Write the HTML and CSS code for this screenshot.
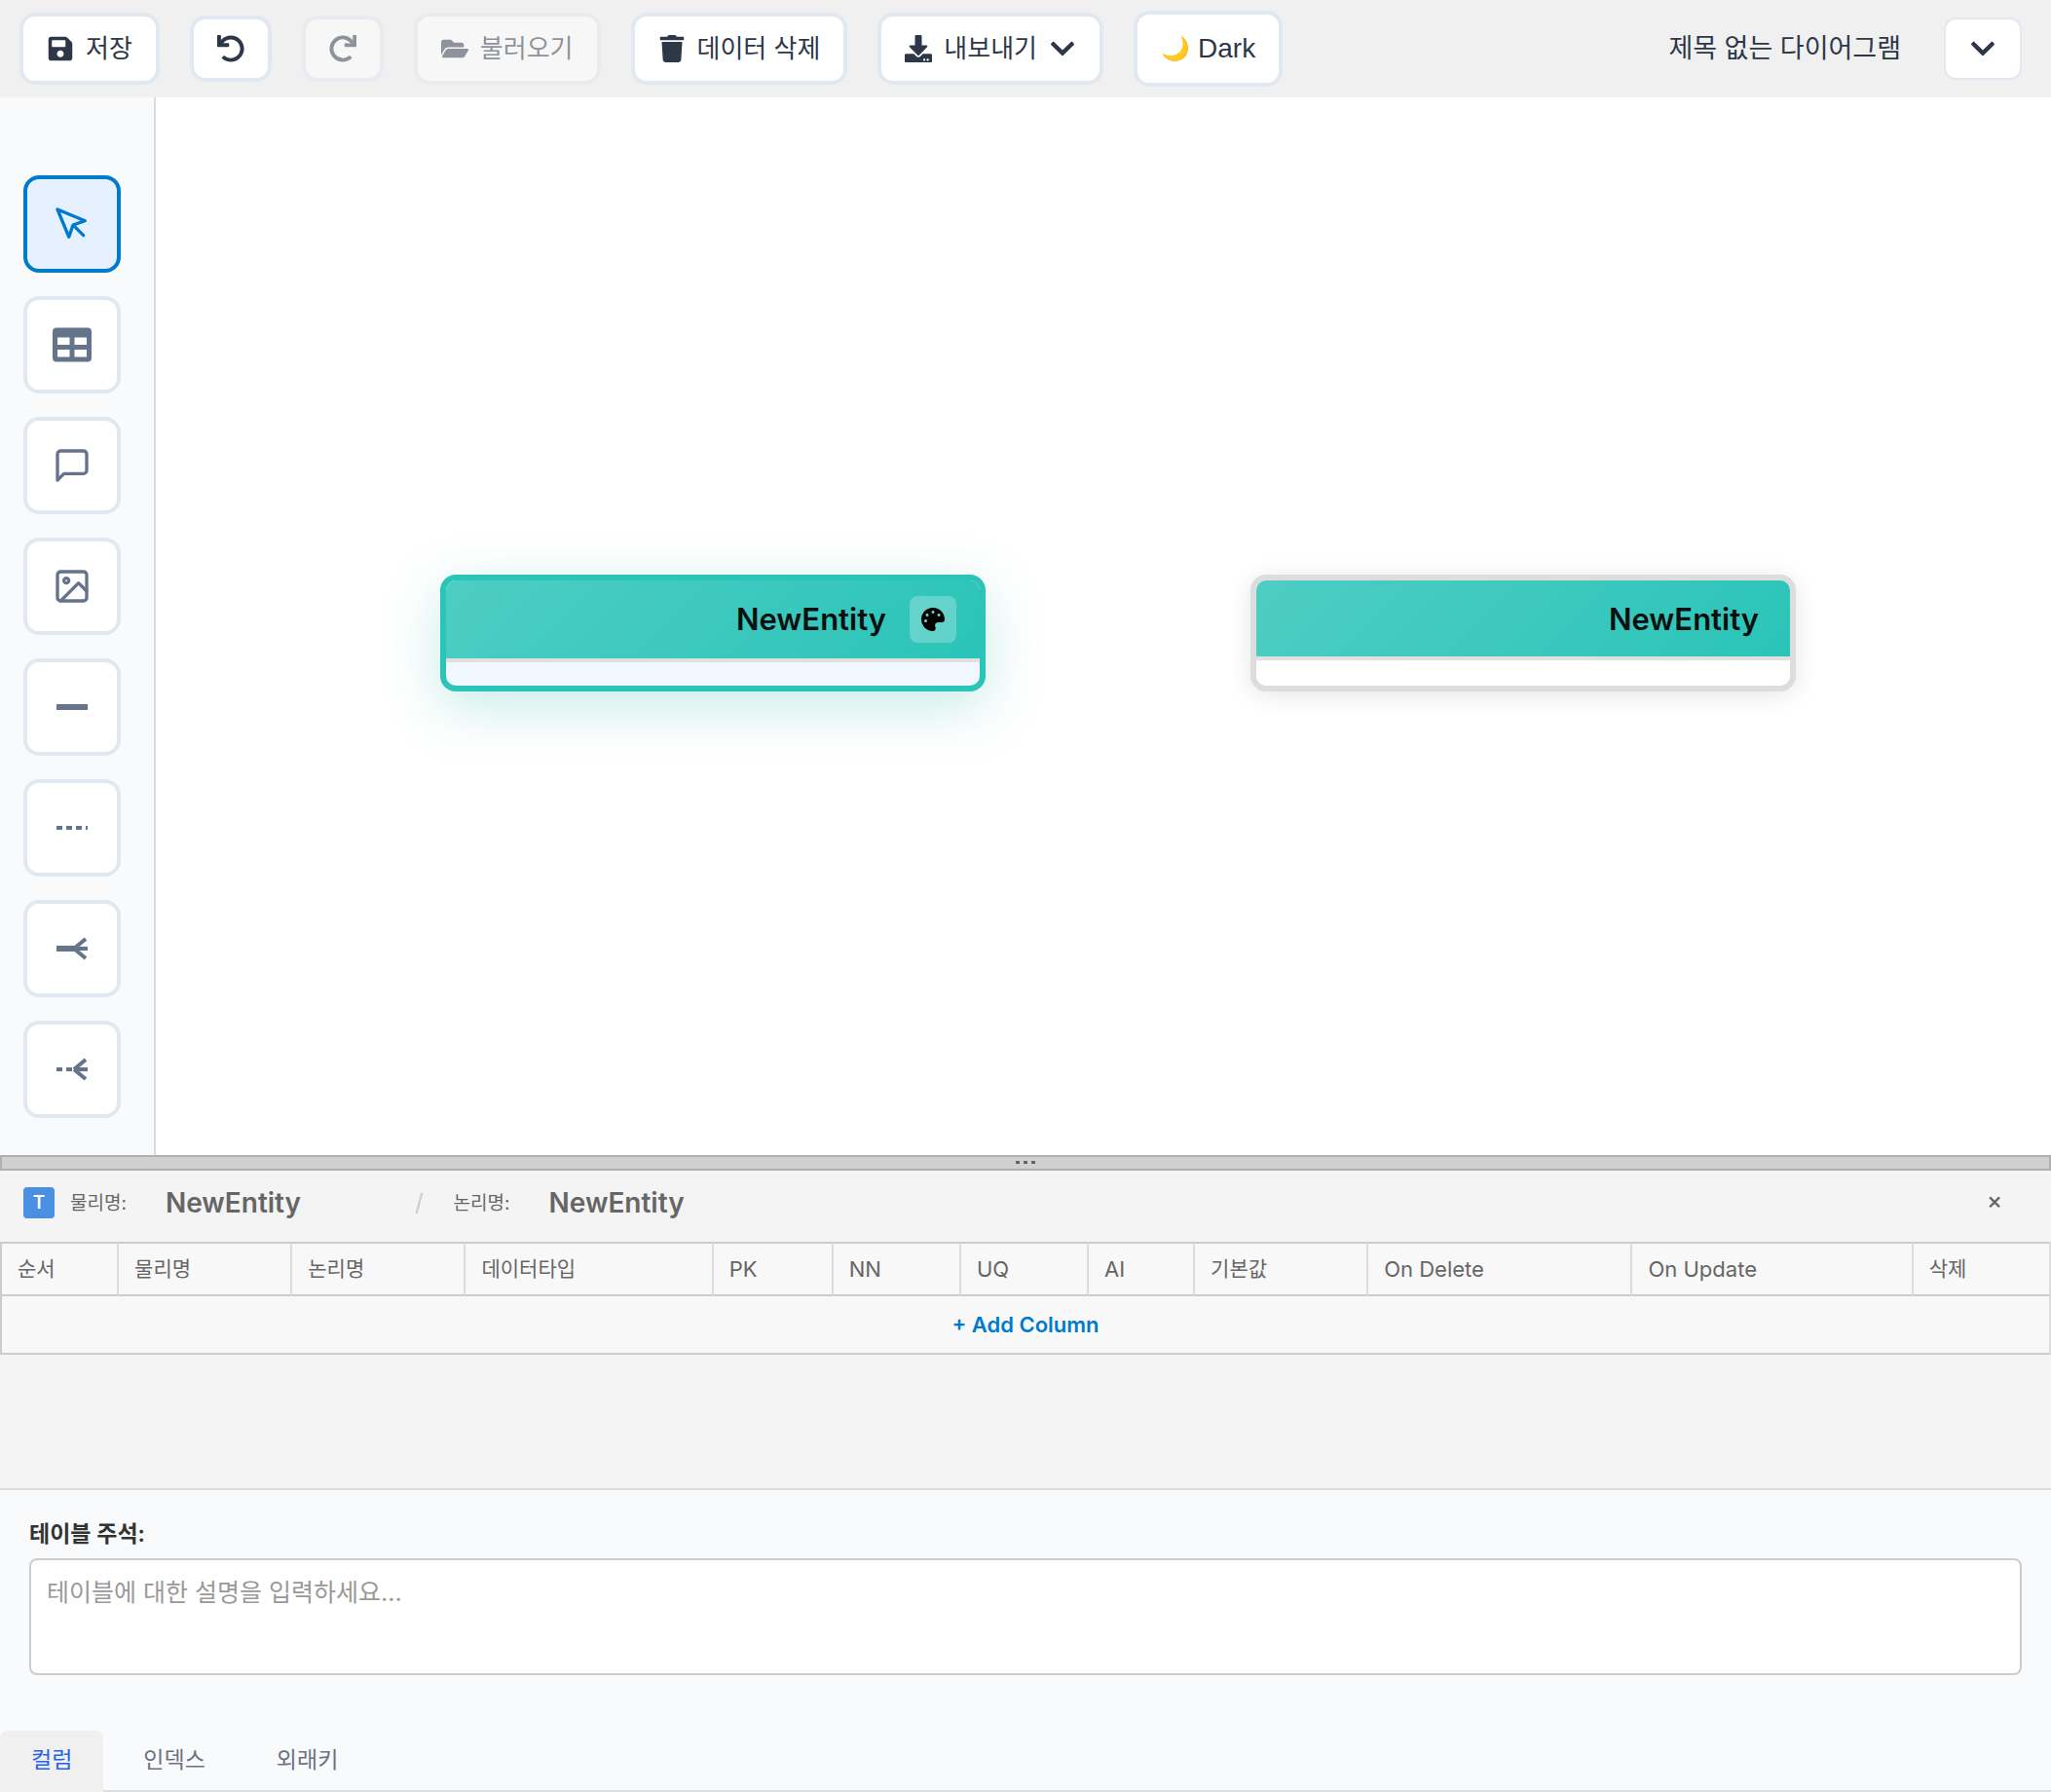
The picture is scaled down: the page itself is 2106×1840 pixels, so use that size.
FILE: index.html
```html
<!DOCTYPE html>
<html lang="ko">
<head>
<meta charset="utf-8">
<meta name="viewport" content="width=device-width, initial-scale=1">
<title>제목 없는 다이어그램</title>
<link rel="stylesheet" href="styles.css">
</head>
<body>
<div class="app">
  <header class="toolbar">
    <button class="btn" type="button"><svg class="icon" viewBox="0 0 448 512"><path d="M433.941 129.941l-83.882-83.882A48 48 0 0 0 316.118 32H48C21.49 32 0 53.49 0 80v352c0 26.51 21.49 48 48 48h352c26.51 0 48-21.49 48-48V163.882a48 48 0 0 0-14.059-33.941zM224 416c-35.346 0-64-28.654-64-64 0-35.346 28.654-64 64-64s64 28.654 64 64c0 35.346-28.654 64-64 64zm96-304.52V212c0 6.627-5.373 12-12 12H76c-6.627 0-12-5.373-12-12V108c0-6.627 5.373-12 12-12h228.52c3.183 0 6.235 1.264 8.485 3.515l3.48 3.48A11.996 11.996 0 0 1 320 111.48z"/></svg>저장</button>
    <button class="btn" type="button" aria-label="실행 취소"><svg class="icon" viewBox="0 0 512 512"><path d="M212.333 224.333H12c-6.627 0-12-5.373-12-12V12C0 5.373 5.373 0 12 0h48c6.627 0 12 5.373 12 12v78.112C117.773 39.279 184.26 7.47 258.175 8.007c136.906.994 246.448 111.623 246.157 248.532C504.041 393.258 393.12 504 256.333 504c-64.089 0-122.496-24.313-166.51-64.215-5.099-4.622-5.334-12.554-.467-17.42l33.967-33.967c4.474-4.474 11.662-4.717 16.401-.525C170.76 415.336 211.58 432 256.333 432c97.268 0 176-78.716 176-176 0-97.267-78.716-176-176-176-58.496 0-110.28 28.476-142.274 72.333h98.274c6.627 0 12 5.373 12 12v48c0 6.627-5.373 12-12 12z"/></svg></button>
    <button class="btn" type="button" aria-label="다시 실행" disabled><svg class="icon" viewBox="0 0 512 512"><path d="M500.33 0h-47.41a12 12 0 0 0-12 12.57l4 82.76A247.42 247.42 0 0 0 256 8C119.34 8 7.9 119.53 8 256.19 8.1 393.07 119.1 504 256 504a247.1 247.1 0 0 0 166.18-63.91 12 12 0 0 0 .48-17.43l-34-34a12 12 0 0 0-16.38-.55A176 176 0 1 1 402.1 157.8l-101.53-4.87a12 12 0 0 0-12.57 12v47.41a12 12 0 0 0 12 12h200.33a12 12 0 0 0 12-12V12a12 12 0 0 0-12-12z"/></svg></button>
    <button class="btn" type="button" disabled><svg class="icon" viewBox="0 0 576 512"><path d="M572.694 292.093L500.27 416.248A63.997 63.997 0 0 1 444.989 448H45.025c-18.523 0-30.064-20.093-20.731-36.093l72.424-124.155A64 64 0 0 1 152 256h399.964c18.523 0 30.064 20.093 20.73 36.093zM152 224h328v-48c0-26.51-21.49-48-48-48H272l-64-64H48C21.49 64 0 85.49 0 112v278.046l69.077-118.418C86.214 242.25 117.989 224 152 224z"/></svg>불러오기</button>
    <button class="btn" type="button"><svg class="icon" viewBox="0 0 448 512"><path d="M432 32H312l-9.4-18.7A24 24 0 0 0 281.1 0H166.8a23.72 23.72 0 0 0-21.4 13.3L136 32H16A16 16 0 0 0 0 48v32a16 16 0 0 0 16 16h416a16 16 0 0 0 16-16V48a16 16 0 0 0-16-16zM53.2 467a48 48 0 0 0 47.9 45h245.8a48 48 0 0 0 47.9-45L416 128H32z"/></svg>데이터 삭제</button>
    <button class="btn" type="button"><svg class="icon" viewBox="0 0 512 512"><path d="M216 0h80c13.3 0 24 10.7 24 24v168h87.7c17.8 0 26.7 21.5 14.1 34.1L269.7 378.3c-7.5 7.5-19.8 7.5-27.3 0L90.1 226.1c-12.6-12.6-3.7-34.1 14.1-34.1H192V24c0-13.3 10.7-24 24-24zm296 376v112c0 13.3-10.7 24-24 24H24c-13.3 0-24-10.7-24-24V376c0-13.3 10.7-24 24-24h146.7l49 49c20.1 20.1 52.5 20.1 72.6 0l49-49H488c13.3 0 24 10.7 24 24zm-124 88c0-11-9-20-20-20s-20 9-20 20 9 20 20 20 20-9 20-20zm64 0c0-11-9-20-20-20s-20 9-20 20 9 20 20 20 20-9 20-20z"/></svg>내보내기<svg class="icon" viewBox="0 0 448 512"><path d="M207.029 381.476L12.686 187.132c-9.373-9.373-9.373-24.569 0-33.941l22.667-22.667c9.357-9.357 24.522-9.375 33.901-.04L224 284.505l154.745-154.021c9.379-9.335 24.544-9.317 33.901.04l22.667 22.667c9.373 9.373 9.373 24.569 0 33.941L240.971 381.476c-9.373 9.372-24.569 9.372-33.942 0z"/></svg></button>
    <button class="btn btn-theme" type="button"><span class="moon">🌙</span>Dark</button>
    <div class="diagram-title">
      <span>제목 없는 다이어그램</span>
      <button class="btn btn-menu" type="button" aria-label="다이어그램 메뉴"><svg class="icon" viewBox="0 0 448 512"><path d="M207.029 381.476L12.686 187.132c-9.373-9.373-9.373-24.569 0-33.941l22.667-22.667c9.357-9.357 24.522-9.375 33.901-.04L224 284.505l154.745-154.021c9.379-9.335 24.544-9.317 33.901.04l22.667 22.667c9.373 9.373 9.373 24.569 0 33.941L240.971 381.476c-9.373 9.372-24.569 9.372-33.942 0z"/></svg></button>
    </div>
  </header>

  <div class="workspace">
    <nav class="tools" aria-label="도구">
      <button class="tool tool-active" type="button" aria-label="선택"><svg class="tool-icon outline" viewBox="0 0 24 24"><path d="M3 3l7.07 16.97 2.51-7.39 7.39-2.51L3 3z"/><path d="M13 13l6 6"/></svg></button>
      <button class="tool" type="button" aria-label="테이블"><svg class="tool-icon" viewBox="0 0 512 512"><path d="M464 32H48C21.49 32 0 53.49 0 80v352c0 26.51 21.49 48 48 48h416c26.51 0 48-21.49 48-48V80c0-26.51-21.49-48-48-48zM224 416H64v-96h160v96zm0-160H64v-96h160v96zm224 160H288v-96h160v96zm0-160H288v-96h160v96z"/></svg></button>
      <button class="tool" type="button" aria-label="메모"><svg class="tool-icon outline" viewBox="0 0 24 24"><path d="M21 15a2 2 0 0 1-2 2H7l-4 4V5a2 2 0 0 1 2-2h14a2 2 0 0 1 2 2z"/></svg></button>
      <button class="tool" type="button" aria-label="이미지"><svg class="tool-icon outline" viewBox="0 0 24 24"><rect x="3" y="3" width="18" height="18" rx="2"/><circle cx="8.5" cy="8.5" r="1.5"/><path d="M21 15l-5-5L5 21"/></svg></button>
      <button class="tool" type="button" aria-label="식별 일대일 관계"><svg class="relation-icon" viewBox="0 0 16 16"><path stroke-width="3" d="M0 8h16"/></svg></button>
      <button class="tool" type="button" aria-label="비식별 일대일 관계"><svg class="relation-icon" viewBox="0 0 16 16"><path stroke-dasharray="3 2" d="M0 8h16"/></svg></button>
      <button class="tool" type="button" aria-label="식별 일대다 관계"><svg class="relation-icon" viewBox="0 0 16 16"><path stroke-width="3" d="M0 8h10"/><path d="M9 8l6-5M9 8h7M9 8l6 5"/></svg></button>
      <button class="tool" type="button" aria-label="비식별 일대다 관계"><svg class="relation-icon" viewBox="0 0 16 16"><path stroke-dasharray="3 2" d="M0 8h9"/><path d="M9 8l6-5M9 8h7M9 8l6 5"/></svg></button>
    </nav>
    <main class="canvas">
      <section class="entity entity-selected entity-first">
        <header class="entity-head">NewEntity
          <button class="palette" type="button" aria-label="색상"><svg viewBox="0 0 512 512"><path d="M204.3 5C104.9 24.4 24.8 104.3 5.2 203.4c-37 187 131.7 326.4 258.8 306.7 41.2-6.4 61.4-54.6 42.5-91.7-23.1-45.4 9.9-98.4 60.9-98.4h79.7c35.8 0 64.8-29.6 64.9-65.3C511.5 97.1 368.1-26.9 204.3 5zM96 320c-17.7 0-32-14.3-32-32s14.3-32 32-32 32 14.3 32 32-14.3 32-32 32zm32-128c-17.7 0-32-14.3-32-32s14.3-32 32-32 32 14.3 32 32-14.3 32-32 32zm128-64c-17.7 0-32-14.3-32-32s14.3-32 32-32 32 14.3 32 32-14.3 32-32 32zm128 64c-17.7 0-32-14.3-32-32s14.3-32 32-32 32 14.3 32 32-14.3 32-32 32z"/></svg></button>
        </header>
      </section>
      <section class="entity entity-second">
        <header class="entity-head">NewEntity</header>
      </section>
    </main>
  </div>

  <div class="resizer" role="separator"><i></i><i></i><i></i></div>

  <section class="editor">
    <header class="editor-head">
      <span class="badge">T</span>
      <label for="physical">물리명:</label>
      <input id="physical" class="name-input" type="text" value="NewEntity">
      <span class="slash">/</span>
      <label for="logical">논리명:</label>
      <input id="logical" class="name-input" type="text" value="NewEntity">
      <button class="close" type="button" aria-label="닫기">×</button>
    </header>
    <div class="columns-area">
      <table class="columns">
        <thead>
          <tr>
            <th class="c-order hangul">순서</th><th class="c-name hangul">물리명</th><th class="c-name hangul">논리명</th><th class="c-type hangul">데이터타입</th><th class="c-pk">PK</th><th class="c-flag">NN</th><th class="c-flag">UQ</th><th class="c-ai">AI</th><th class="c-name hangul">기본값</th><th class="c-delete">On Delete</th><th class="c-update">On Update</th><th class="c-remove hangul">삭제</th>
          </tr>
        </thead>
        <tbody>
          <tr><td colspan="12"><button class="add" type="button">+ Add Column</button></td></tr>
        </tbody>
      </table>
    </div>
    <div class="comment">
      <label for="comment">테이블 주석:</label>
      <textarea id="comment" placeholder="테이블에 대한 설명을 입력하세요..."></textarea>
    </div>
    <nav class="tabs">
      <button class="tab tab-active" type="button">컬럼</button>
      <button class="tab" type="button">인덱스</button>
      <button class="tab" type="button">외래키</button>
    </nav>
  </section>
</div>
</body>
</html>
```
FILE: styles.css
```css
* {
  box-sizing: border-box;
}

body {
  margin: 0;
  font-family: Inter, "Noto Sans CJK KR", sans-serif;
  color: #333;
  background: #fff;
}

button,
input,
textarea {
  font: inherit;
  color: inherit;
}

button {
  cursor: pointer;
}

.app {
  display: flex;
  flex-direction: column;
  min-height: 100vh;
}

/* Toolbar */
.toolbar {
  display: flex;
  align-items: center;
  gap: 31px;
  height: 100px;
  padding: 0 30px 0 20px;
  background: #f0f0f0;
  color: #2d3748;
  font-family: "Liberation Sans", "Noto Sans CJK KR", sans-serif;
}

.btn {
  display: flex;
  align-items: center;
  gap: 12px;
  padding: 16px 24px;
  border: 4px solid #e2e8f0;
  border-radius: 16px;
  background: #fff;
  font-size: 26px;
  line-height: 34px;
  white-space: nowrap;
}

.btn:disabled {
  opacity: 0.5;
}

.btn-theme {
  gap: 8px;
  font-size: 28px;
  line-height: 38px;
}

.moon {
  font-size: 24px;
}

.btn-menu {
  border-width: 2px;
  border-radius: 12px;
}

.icon {
  display: block;
  width: 28px;
  height: 28px;
  fill: currentColor;
}

.diagram-title {
  display: flex;
  align-items: center;
  gap: 44px;
  margin-left: auto;
  font-size: 27px;
  line-height: 34px;
}

/* Workspace */
.workspace {
  display: flex;
  flex: 1;
}

.tools {
  display: flex;
  flex-direction: column;
  gap: 24px;
  padding: 80px 34px 38px 24px;
  border-right: 2px solid #ddd;
  background: #f8fafc;
}

.tool {
  display: flex;
  align-items: center;
  justify-content: center;
  width: 100px;
  height: 100px;
  padding: 0;
  border: 4px solid #e2e8f0;
  border-radius: 16px;
  background: #fff;
  color: #64748b;
}

.tool-active {
  border-color: #007acc;
  background: #e6f1ff;
  color: #007acc;
}

.tool-icon {
  width: 40px;
  height: 40px;
  fill: currentColor;
}

.outline {
  fill: none;
  stroke: currentColor;
  stroke-width: 2;
  stroke-linecap: round;
  stroke-linejoin: round;
}

.relation-icon {
  width: 32px;
  height: 32px;
  fill: none;
  stroke: currentColor;
  stroke-width: 2;
}

.canvas {
  position: relative;
  flex: 1;
  background: #fff;
}

.entity {
  position: absolute;
  top: 490px;
  width: 560px;
  height: 120px;
  overflow: hidden;
  border: 6px solid #ddd;
  border-radius: 16px;
  background: #fff;
  box-shadow: 0 4px 24px rgba(0, 0, 0, 0.1);
}

.entity-first {
  left: 292px;
}

.entity-second {
  left: 1124px;
}

.entity-selected {
  border-color: #2bc4b8;
  background: #f0f7ff;
  box-shadow: 0 16px 56px rgba(43, 180, 168, 0.26);
}

.entity-head {
  display: flex;
  align-items: center;
  justify-content: flex-end;
  gap: 24px;
  padding: 20px 32px 18px;
  border-bottom: 4px solid #e0e0e0;
  background: linear-gradient(135deg, #4ecdc4, #2bc4b8);
  color: #08100f;
  font-size: 31px;
  font-weight: 600;
  line-height: 40px;
}

.entity-selected .entity-head {
  padding: 16px 24px;
}

.palette {
  display: flex;
  align-items: center;
  justify-content: center;
  width: 48px;
  height: 48px;
  padding: 0;
  border: 0;
  border-radius: 8px;
  background: rgba(255, 255, 255, 0.25);
  color: #000;
}

.palette svg {
  width: 24px;
  height: 24px;
  fill: currentColor;
}

/* Editor panel */
.resizer {
  display: flex;
  align-items: center;
  justify-content: center;
  gap: 4px;
  height: 16px;
  padding-bottom: 1px;
  border: 2px solid #b0b0b0;
  background: #d0d0d0;
}

.resizer i {
  width: 4px;
  height: 3px;
  background: #666;
}

.editor {
  background: #f4f4f4;
}

.editor-head {
  display: flex;
  align-items: center;
  gap: 16px;
  height: 73px;
  padding: 0 50px 8px 24px;
  color: #666;
  font-size: 19px;
}

.editor-head label {
  padding-bottom: 2px;
}

.badge {
  width: 32px;
  border-radius: 4px;
  background: #4a90e2;
  color: #fff;
  font-weight: 600;
  line-height: 32px;
  text-align: center;
}

.name-input {
  width: 264px;
  padding: 0 24px;
  border: 0;
  background: transparent;
  font-size: 28px;
  font-weight: 600;
}

.slash {
  padding-right: 15px;
  color: #ccc;
  font-size: 24px;
}

.close {
  margin-left: auto;
  padding: 0 0 4px;
  border: 0;
  background: none;
  font-size: 24px;
  font-weight: 500;
  line-height: 32px;
}

.columns-area {
  min-height: 253px;
}

.columns {
  width: 100%;
  table-layout: fixed;
  border-collapse: separate;
  border-spacing: 0;
  border-left: 2px solid #ccc;
  background: #f8f8f8;
  color: #666;
  font-size: 22px;
}

.columns th {
  height: 56px;
  padding: 0 16px;
  border: solid #ddd;
  border-width: 2px 2px 2px 0;
  border-top-color: #ccc;
  border-bottom-color: #ccc;
  font-weight: 400;
  text-align: left;
}

.columns .hangul {
  padding-bottom: 5px;
  font-size: 21px;
}

.columns td {
  padding: 0;
  border-right: 2px solid #ddd;
  border-bottom: 2px solid #ccc;
}

.c-order { width: 120px; }
.c-name { width: 178px; }
.c-type { width: 254px; }
.c-pk { width: 123px; }
.c-flag { width: 131px; }
.c-ai { width: 109px; }
.c-delete { width: 271px; }
.c-update { width: 288px; }
.c-remove { width: 141px; }

.add {
  display: block;
  width: 100%;
  height: 58px;
  padding: 0;
  border: 0;
  background: none;
  color: #007acc;
  font-weight: 600;
}

.comment {
  display: flex;
  flex-direction: column;
  gap: 8px;
  padding: 28px 30px 57px;
  border-top: 2px solid #ddd;
  background: #f8fafc;
}

.comment label {
  font-size: 23px;
  font-weight: 600;
  line-height: 34px;
}

.comment textarea {
  display: block;
  width: 100%;
  height: 120px;
  padding: 14px 16px;
  border: 2px solid #ccc;
  border-radius: 8px;
  background: #fff;
  font-size: 25px;
  line-height: 38px;
  resize: none;
}

.comment textarea::placeholder {
  color: #999;
}

.tabs {
  display: flex;
  gap: 9px;
  background: #f8fafc;
  box-shadow: inset 0 -2px #ddd;
}

.tab {
  height: 63px;
  padding: 0 32px 8px;
  border: 0;
  border-radius: 8px 8px 0 0;
  background: none;
  color: #6b7280;
  font-size: 23px;
}

.tab-active {
  background: #f0f0f0;
  color: #2563eb;
}
```
